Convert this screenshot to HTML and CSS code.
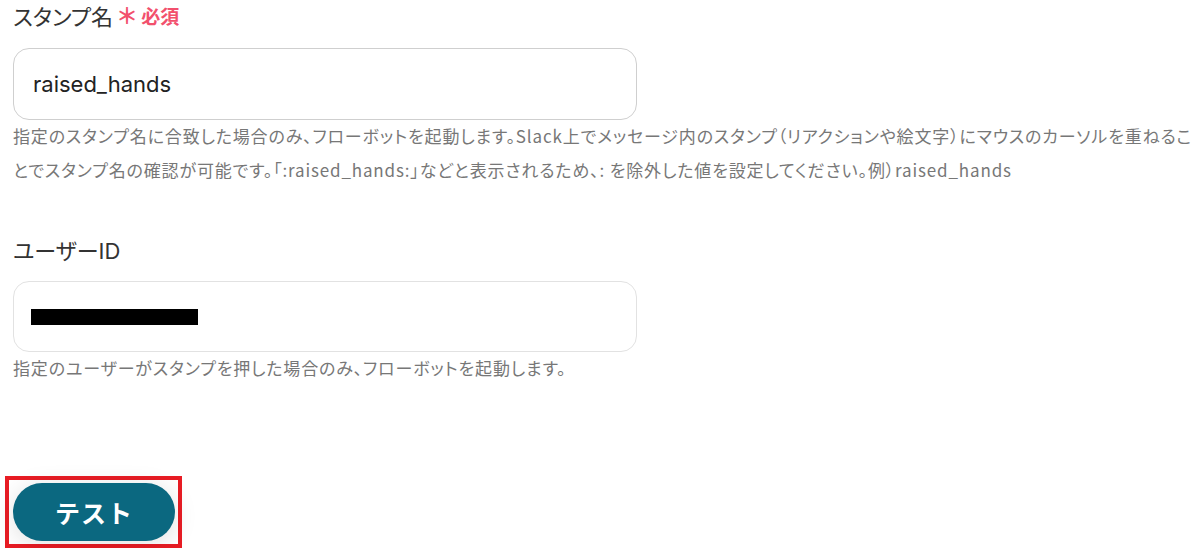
FILE: index.html
```html
<!DOCTYPE html>
<html>
    <head>
        <meta charset="utf-8" />
        <title>スタンプ設定</title>
        <link rel="stylesheet" href="styles.css">
    </head>
    <body>
        <div class="form">
            <div class="field">
                <div class="label">スタンプ名<span class="required"><span class="star">＊</span>必須</span></div>
                <div class="input">raised_hands</div>
                <div class="help">指定のスタンプ名に合致した場合のみ、フローボットを起動します。Slack上でメッセージ内のスタンプ（リアクションや絵文字）にマウスのカーソルを重ねることでスタンプ名の確認が可能です。「:raised_hands:」などと表示されるため、: を除外した値を設定してください。例）raised_hands</div>
            </div>
            <div class="field field-user">
                <div class="label">ユーザーID</div>
                <div class="input input-light"><span class="masked"></span></div>
                <div class="help">指定のユーザーがスタンプを押した場合のみ、フローボットを起動します。</div>
            </div>
            <div class="actions">
                <div class="highlight">
                    <button class="btn-test">テスト</button>
                </div>
            </div>
        </div>
    </body>
</html>
```

FILE: styles.css
```css
html, body { margin: 0; padding: 0; background: #fff; }
body {
    font-family: Inter, "Noto Sans CJK JP", sans-serif;
    color: #333;
    font-feature-settings: "palt";
}

.form {
    padding: 1px 0 0 13px;
}

.label {
    font-size: 22px;
    line-height: 30px;
    color: #333;
}

.required {
    color: #f2506d;
    font-size: 19px;
    font-weight: bold;
    margin-left: 5px;
    vertical-align: 1px;
}

.star {
    font-size: 22px;
    margin-right: 5px;
}

.input {
    box-sizing: border-box;
    width: 624px;
    height: 72px;
    margin-top: 15px;
    padding: 0 19px;
    border: 1px solid #cfcfcf;
    border-radius: 16px;
    display: flex;
    align-items: center;
    font-size: 22px;
    color: #222;
}

.input-light {
    height: 71px;
    border-color: #e2e2e2;
    padding-left: 17px;
}

.masked {
    display: inline-block;
    width: 167px;
    height: 16px;
    background: #000;
}

.help {
    font-family: "Noto Sans CJK JP", sans-serif;
    font-size: 17px;
    letter-spacing: 0.05em;
    line-height: 34px;
    color: #777;
    margin-top: -1px;
}

.field-user {
    margin-top: 49px;
}

.actions {
    margin-top: 91px;
}

/* annotation box around the button */
.highlight {
    display: inline-block;
    margin-left: -8px;
    padding: 3px 3px 3px 4px;
    border: 4px solid #e81c24;
}

.btn-test {
    display: block;
    width: 162px;
    height: 58px;
    border: none;
    border-radius: 29px;
    background: #0b6880;
    color: #fff;
    font-family: "Noto Sans CJK JP", sans-serif;
    font-size: 25px;
    font-weight: bold;
    letter-spacing: 1px;
    box-shadow: 0 4px 24px rgba(0, 0, 0, 0.12);
}
```
